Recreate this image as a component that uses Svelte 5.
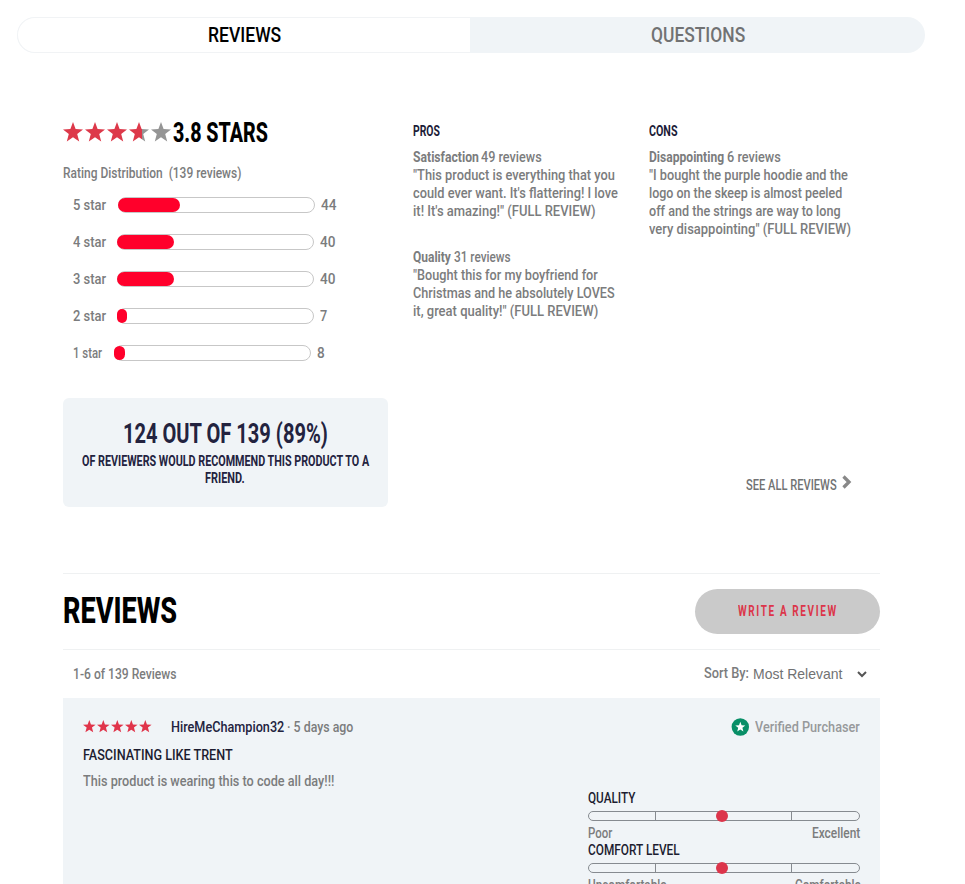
<script>
  const distribution = [
    { label: '5 star', labelWidth: 33, gap: 12, fill: 62, count: '44', countWidth: 15 },
    { label: '4 star', labelWidth: 33, gap: 11, fill: 57, count: '40', countWidth: 15 },
    { label: '3 star', labelWidth: 33, gap: 11, fill: 57, count: '40', countWidth: 15 },
    { label: '2 star', labelWidth: 33, gap: 11, fill: 10, count: '7', countWidth: 7 },
    { label: '1 star', labelWidth: 29, gap: 12, fill: 11, count: '8', countWidth: 7.5 }
  ];

  const pros = [
    {
      topic: 'Satisfaction', topicWidth: 65.5, count: '49 reviews', countWidth: 61,
      lines: [
        ['"This product is everything that you', 201.5],
        ["could ever want. It's flattering! I love", 204.5],
        ['it! It\'s amazing!" (FULL REVIEW)', 182.5]
      ]
    },
    {
      topic: 'Quality', topicWidth: 38, count: '31 reviews', countWidth: 57,
      lines: [
        ['"Bought this for my boyfriend for', 184.5],
        ['Christmas and he absolutely LOVES', 201.5],
        ['it, great quality!" (FULL REVIEW)', 185.5]
      ]
    }
  ];

  const cons = [
    {
      topic: 'Disappointing', topicWidth: 75, count: '6 reviews', countWidth: 53.5,
      lines: [
        ['"I bought the purple hoodie and the', 198.5],
        ['logo on the skeep is almost peeled', 193.5],
        ['off and the strings are way to long', 192],
        ['very disappointing" (FULL REVIEW)', 202]
      ]
    }
  ];

  const scales = [
    { name: 'QUALITY', nameWidth: 47, low: 'Poor', lowWidth: 24.5, high: 'Excellent', highWidth: 48.5 },
    { name: 'COMFORT LEVEL', nameWidth: 91.5, low: 'Uncomfortable', lowWidth: 78.5, high: 'Comfortable', highWidth: 65.5 }
  ];

  const star = 'M10 0l2.6 7.1 7.4.3-5.8 4.7 2 7.4-6.2-4.2-6.2 4.2 2-7.4L0 7.4l7.4-.3z';

  function condense(node) {
    const target = node.parentElement.getBoundingClientRect().width;
    node.style.transform = `scaleX(${target / node.offsetWidth})`;
  }
</script>

{#snippet text(value, width, kind = '')}
  <span class="run {kind}" style:width="{width}px"><span class="glyphs" use:condense>{value}</span></span>
{/snippet}

{#snippet topics(items)}
  {#each items as item}
    <div class="topic">
      <div class="line">{@render text(item.topic, item.topicWidth, 'strong')}{@render text(item.count, item.countWidth)}</div>
      {#each item.lines as [value, width]}
        <div class="line">{@render text(value, width)}</div>
      {/each}
    </div>
  {/each}
{/snippet}

<main>
  <nav>
    <div class="tab active">{@render text('REVIEWS', 73.5)}</div>
    <div class="tab">{@render text('QUESTIONS', 94.5)}</div>
  </nav>

  <section class="summary">
    <div class="rating">
      <div class="score">
        <svg class="big-stars" width="108" height="20" viewBox="0 0 108 20">
          <defs>
            <linearGradient id="partial"><stop offset=".66" stop-color="#dd394a" /><stop offset=".66" stop-color="#959595" /></linearGradient>
          </defs>
          {#each [0, 1, 2, 3, 4] as i}
            <path d={star} transform="translate({i * 22} 0)" fill={i < 3 ? '#dd394a' : i === 3 ? 'url(#partial)' : '#959595'} />
          {/each}
        </svg>
        {@render text('3.8 STARS', 95, 'score-text')}
      </div>
      <div class="caption">{@render text('Rating Distribution\u00a0 (139 reviews)', 178)}</div>
      {#each distribution as row}
        <div class="bar-row">
          {@render text(row.label, row.labelWidth)}
          <div class="bar" style:margin-left="{row.gap}px"><div class="fill" style:width="{row.fill}px"></div></div>
          {@render text(row.count, row.countWidth)}
        </div>
      {/each}
      <div class="recommend">
        <div class="big">{@render text('124 OUT OF 139 (89%)', 205)}</div>
        <div class="small">{@render text('OF REVIEWERS WOULD RECOMMEND THIS PRODUCT TO A', 287)}</div>
        <div class="small">{@render text('FRIEND.', 40)}</div>
      </div>
    </div>
    <div class="column pros">
      <h3>{@render text('PROS', 27)}</h3>
      {@render topics(pros)}
    </div>
    <div class="column cons">
      <h3>{@render text('CONS', 28.5)}</h3>
      {@render topics(cons)}
      <div class="see-all">
        {@render text('SEE ALL REVIEWS', 90.5)}
        <svg width="10" height="14" viewBox="0 0 10 14"><path d="M1.5 1.5L7 7l-5.500 5.500" fill="none" stroke="#888" stroke-width="3.300" /></svg>
      </div>
    </div>
  </section>

  <section class="reviews">
    <header>
      <h2>{@render text('REVIEWS', 114)}</h2>
      <button>{@render text('WRITE A REVIEW', 100)}</button>
    </header>
    <div class="sort">
      {@render text('1-6 of 139 Reviews', 103.5)}
      <div class="sort-by">
        {@render text('Sort By:', 45)}
        {@render text('Most Relevant', 89.5, 'select')}
        <svg width="10" height="7" viewBox="0 0 10 7"><path d="M1 1l4 4 4-4" fill="none" stroke="#555" stroke-width="2" /></svg>
      </div>
    </div>
    <article>
      <div class="meta">
        <svg class="stars" width="69" height="13" viewBox="0 0 69 13">
          {#each [0, 1, 2, 3, 4] as i}
            <path d={star} transform="translate({i * 14} 0) scale(.63)" fill="#e0344a" />
          {/each}
        </svg>
        {@render text('HireMeChampion32', 113.5, 'author')}
        {@render text('· 5 days ago', 66.5)}
        <div class="verified">
          <svg width="18" height="18" viewBox="0 0 18 18"><circle cx="9.300" cy="9" r="8.700" fill="#088f67" /><path d={star} transform="translate(4.300 3.800) scale(.5)" fill="#fff" /></svg>
          {@render text('Verified Purchaser', 105)}
        </div>
      </div>
      <h4>{@render text('FASCINATING LIKE TRENT', 149.5)}</h4>
      <p>{@render text('This product is wearing this to code all day!!!', 251.5)}</p>
      <div class="scales">
        {#each scales as scale}
          <div class="scale">
            <div class="scale-name">{@render text(scale.name, scale.nameWidth)}</div>
            <div class="track"><i></i><i></i><i></i><b></b></div>
            <div class="ends">{@render text(scale.low, scale.lowWidth)}{@render text(scale.high, scale.highWidth)}</div>
          </div>
        {/each}
      </div>
    </article>
  </section>
</main>

<style>
  :global(body) { margin: 0; background: #fff; }
  main {
    box-sizing: border-box;
    height: 884px;
    padding: 17px 40px 0 17px;
    overflow: hidden;
    font: 500 14.5px/18px Roboto, "Liberation Sans", sans-serif;
    color: #7b7c7d;
  }
  h2, h3, h4, p { margin: 0; font-size: inherit; font-weight: inherit; }
  svg { display: block; flex: none; }
  .run { display: block; flex: none; white-space: nowrap; text-align: left; }
  .glyphs { display: inline-block; transform-origin: 0 50%; vertical-align: top; }
  .strong { font-weight: 700; margin-right: 3px; }
  .score .run, .bar-row .run, .line .run, .see-all .run, .meta .run, h4 .run, p .run, .sort > .run, .small .run {
    padding-top: 1px;
    margin-bottom: -1px;
  }
  .bar-row .run, .see-all .run, .sort > .run, .meta .run, .score .run { padding-top: 2px; margin-bottom: 0; }

  nav { display: flex; height: 36px; border-radius: 18px; background: #f0f4f7; overflow: hidden; }
  .tab { flex: 1; display: flex; align-items: center; justify-content: center; padding-left: 1px; font-size: 21px; line-height: 36px; color: #717273; }
  .tab.active { box-sizing: border-box; flex: 0 0 453px; border: 1px solid #f1f3f5; border-right: 0; border-radius: 18px 0 0 18px; background: #fff; color: #000; }

  .summary { display: flex; height: 455px; margin: 65px 0 0 46px; }
  .rating { width: 325px; }
  .score { display: flex; align-items: center; height: 28px; gap: 2px; }
  .score .score-text { font-size: 27.5px; font-weight: 800; line-height: 28px; color: #000; }
  .caption { margin: 18px 0 14px; font-size: 14px; }
  .bar-row { display: flex; align-items: center; height: 18px; margin: 0 0 19px 10px; }
  .bar { box-sizing: border-box; width: 197px; height: 16px; margin-right: 6px; border: 1px solid #c7c7c7; border-radius: 8px; }
  .fill { height: 14px; margin-left: -1px; border-radius: 7px; background: #ff002b; }
  .recommend { box-sizing: border-box; height: 109px; margin-top: 36px; padding: 20px 1px 0 0; border-radius: 6px; background: #f0f4f7; color: #23233f; }
  .big, .small { display: flex; justify-content: center; font-weight: 700; }
  .big { font-size: 28px; line-height: 31px; margin-bottom: 3px; }
  .small { font-size: 15px; line-height: 17px; }
  .column { display: flex; flex-direction: column; padding-top: 4px; }
  .pros { width: 211px; margin-left: 24.5px; }
  .cons { width: 205px; margin-left: 25px; }
  h3 { margin-bottom: 8px; font-weight: 700; font-size: 15px; color: #1c1c38; }
  .topic { margin-bottom: 28px; }
  .line { display: flex; height: 18px; }
  .see-all { display: flex; gap: 6px; margin: 209px 0 0 97px; color: #717273; }

  .reviews { width: 817px; margin: 0 0 0 46px; }
  header { box-sizing: border-box; display: flex; align-items: center; justify-content: space-between; height: 77px; border: solid #eff1f2; border-width: 1px 0; }
  h2 { margin-bottom: 3px; font-size: 37.5px; line-height: 44px; font-weight: 800; color: #000; }
  button { display: flex; align-items: center; justify-content: center; width: 185px; height: 45px; padding: 0; border: 0; border-radius: 23px; background: #cacaca; color: #dc3549; font: 700 14.5px/18px Roboto, sans-serif; letter-spacing: 2.4px; }
  .sort { display: flex; align-items: center; justify-content: space-between; height: 48px; padding: 0 13px 0 10px; }
  .sort-by { display: flex; align-items: center; gap: 4.5px; }
  .sort-by svg { margin-left: 10px; }
  .sort-by .select { font-family: "Liberation Sans", sans-serif; font-weight: 400; font-size: 15px; color: #717273; }
  article { height: 230px; padding: 20px 20px 0; background: #f0f4f7; }
  .meta { display: flex; align-items: center; height: 18px; }
  .meta .stars { margin-bottom: 2px; }
  .author { margin: 0 2.5px 0 19px; color: #23233f; }
  .verified { display: flex; align-items: center; gap: 6px; margin-left: auto; color: #97999b; }
  h4 { margin-top: 10px; color: #1c1c30; }
  p { margin-top: 8px; }
  .scales { width: 272px; margin-left: auto; }
  .scale-name { color: #1c1c30; line-height: 17px; }
  .scale { height: 52px; }
  .track { position: relative; box-sizing: border-box; display: flex; height: 10px; margin: 4px 0; border: 1px solid #868b90; border-radius: 5px; }
  .track i { flex: 2; border-left: 1px solid #868b90; }
  .track i:first-child { flex: 0 0 66px; border: 0; }
  .track i:nth-child(3) { flex: 0 0 67px; }
  .track b { position: absolute; left: 127px; top: -2px; width: 12px; height: 12px; border-radius: 50%; background: #dc354b; }
  .ends { display: flex; justify-content: space-between; padding-top: 1px; line-height: 16px; }
</style>
